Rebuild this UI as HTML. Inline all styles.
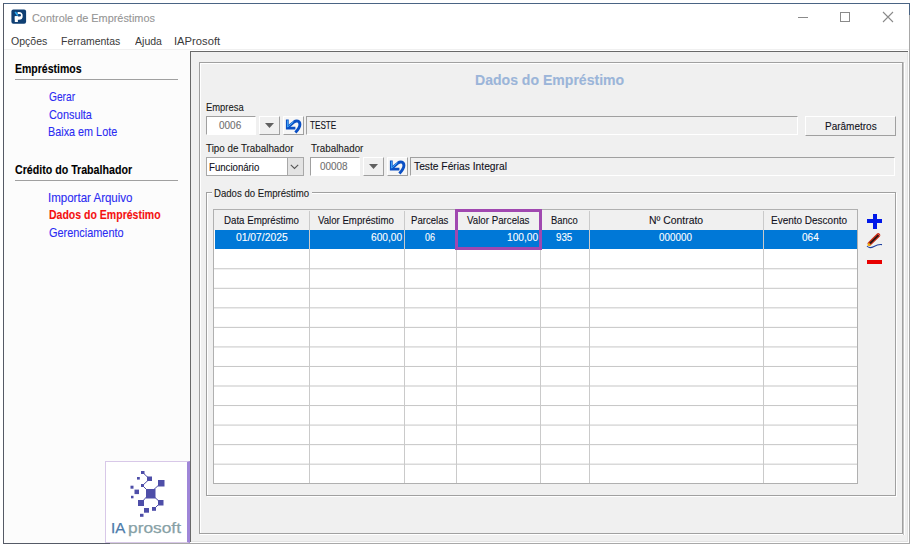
<!DOCTYPE html>
<html><head><meta charset="utf-8"><style>
html,body{margin:0;padding:0;background:#fff;width:914px;height:548px;overflow:hidden;position:relative}
body>div,body>svg{position:absolute}
.t{position:absolute;white-space:nowrap;font-family:"Liberation Sans", sans-serif;-webkit-text-stroke:0.1px currentColor;transform-origin:0 0}
</style></head><body>
<div style="left:3px;top:3px;width:907px;height:541px;background:#fff"></div>
<div style="left:3px;top:3px;width:907px;height:1px;background:#4a6484"></div>
<div style="left:3px;top:3px;width:1px;height:541px;background:#555a66"></div>
<div style="left:3px;top:543px;width:107px;height:1px;background:#555a66"></div>
<div style="left:110px;top:543px;width:800px;height:1px;background:#a8a8a8"></div>
<div style="left:909px;top:3px;width:1px;height:12px;background:#4a6484"></div>
<div style="left:909px;top:15px;width:1px;height:529px;background:#a8a8a8"></div>
<svg style="position:absolute;left:11px;top:9px" width="16" height="16" viewBox="0 0 16 16"><g transform="translate(0.4,0.5)">
<rect x="0" y="0" width="14.7" height="14.3" rx="2" fill="#0f3f73"/>
<path d="M3.4 6.6 H6.5 V12.5 H3.4 Z" fill="#fff"/>
<path d="M6.2 2.6 H7.45 A3.85 3.85 0 0 1 7.45 10.3 H3.4 V7 H8.4 A1.2 1.2 0 0 0 8.4 4.6 H6.2 Z" fill="#fff"/>
<path d="M3.8 2.5 L6.4 6" stroke="#2aa8f0" stroke-width="1.7"/>
</g></svg>
<div class="t" style="left:31.90px;top:13px;font-size:11.2px;line-height:11.2px;color:#959595;font-weight:400;transform:scaleX(0.9737);">Controle de Empréstimos</div>
<div style="left:798px;top:17px;width:10px;height:1px;background:#8a8a8a"></div>
<div style="left:840px;top:12px;width:10px;height:10px;border:1px solid #8a8a8a;box-sizing:border-box"></div>
<svg style="position:absolute;left:882px;top:11px" width="12" height="12" viewBox="0 0 12 12">
<path d="M1 1 L11 11 M11 1 L1 11" stroke="#8a8a8a" stroke-width="1.1" fill="none"/></svg>
<div class="t" style="left:10.60px;top:36px;font-size:11.2px;line-height:11.2px;color:#3a3a3a;font-weight:400;transform:scaleX(0.9420);-webkit-text-stroke:0">Opções</div>
<div class="t" style="left:61.10px;top:36px;font-size:11.2px;line-height:11.2px;color:#3a3a3a;font-weight:400;transform:scaleX(0.9354);-webkit-text-stroke:0">Ferramentas</div>
<div class="t" style="left:134.60px;top:36px;font-size:11.2px;line-height:11.2px;color:#3a3a3a;font-weight:400;transform:scaleX(0.9425);-webkit-text-stroke:0">Ajuda</div>
<div class="t" style="left:174.40px;top:36px;font-size:11.2px;line-height:11.2px;color:#3a3a3a;font-weight:400;transform:scaleX(1.0021);-webkit-text-stroke:0">IAProsoft</div>
<div style="left:4px;top:49px;width:905px;height:1px;background:#f0f0f0"></div>
<div style="left:4px;top:50px;width:186px;height:493px;background:#fcfcfc"></div>
<div class="t" style="left:15.30px;top:63px;font-size:12.4px;line-height:12.4px;color:#000;font-weight:700;transform:scaleX(0.8485);">Empréstimos</div>
<div style="left:15px;top:79px;width:163px;height:1px;background:#a0a0a0"></div>
<div class="t" style="left:48.80px;top:91px;font-size:12.4px;line-height:12.4px;color:#2b2bf2;font-weight:400;transform:scaleX(0.8242);">Gerar</div>
<div class="t" style="left:49.30px;top:109px;font-size:12.4px;line-height:12.4px;color:#2b2bf2;font-weight:400;transform:scaleX(0.8773);">Consulta</div>
<div class="t" style="left:48.43px;top:126px;font-size:12.4px;line-height:12.4px;color:#2b2bf2;font-weight:400;transform:scaleX(0.8734);">Baixa em Lote</div>
<div class="t" style="left:15.00px;top:164px;font-size:12.4px;line-height:12.4px;color:#000;font-weight:700;transform:scaleX(0.8587);">Crédito do Trabalhador</div>
<div style="left:15px;top:180px;width:163px;height:1px;background:#a0a0a0"></div>
<div class="t" style="left:48.07px;top:192px;font-size:12.4px;line-height:12.4px;color:#2b2bf2;font-weight:400;transform:scaleX(0.9295);">Importar Arquivo</div>
<div class="t" style="left:49.00px;top:209px;font-size:12.4px;line-height:12.4px;color:#f41010;font-weight:700;transform:scaleX(0.8489);">Dados do Empréstimo</div>
<div class="t" style="left:49.00px;top:227px;font-size:12.4px;line-height:12.4px;color:#2b2bf2;font-weight:400;transform:scaleX(0.8807);">Gerenciamento</div>
<div style="left:105px;top:461px;width:85px;height:82px;background:#fff;border:1px solid #d8c8e8;border-right:3px solid #9f86d8;box-sizing:border-box"></div>
<svg style="position:absolute;left:0;top:0" width="914" height="548"><rect x="146" y="489" width="9.5" height="9.5" fill="#4e4ea8"/><rect x="158" y="480" width="6.5" height="6.5" fill="#4e4ea8"/><rect x="138" y="500" width="6" height="6" fill="#4e4ea8"/><rect x="158" y="500" width="5.5" height="5.5" fill="#4e4ea8"/><rect x="147" y="476.5" width="5" height="4.5" fill="#4e4ea8"/><rect x="141" y="471" width="3.5" height="3" fill="#4e4ea8"/><rect x="137" y="477" width="2.8" height="2.6" fill="#4e4ea8"/><rect x="141" y="484" width="3" height="3" fill="#4e4ea8"/><rect x="130.5" y="485.7" width="3" height="3" fill="#4e4ea8"/><rect x="134.5" y="489.6" width="4.5" height="4.5" fill="#4e4ea8"/><rect x="131" y="495.8" width="2.5" height="2.5" fill="#4e4ea8"/><rect x="144" y="508" width="5" height="4.7" fill="#4e4ea8"/><rect x="152" y="507" width="4" height="3.8" fill="#4e4ea8"/><rect x="140" y="513.8" width="3.5" height="3" fill="#4e4ea8"/><line x1="150" y1="493" x2="161" y2="483" stroke="#4e4ea8" stroke-width="1"/><line x1="150" y1="493" x2="161" y2="503" stroke="#4e4ea8" stroke-width="1"/><line x1="150" y1="493" x2="141" y2="503" stroke="#4e4ea8" stroke-width="1"/><line x1="150" y1="493" x2="142.5" y2="485.5" stroke="#4e4ea8" stroke-width="1"/><line x1="149.5" y1="479" x2="142.7" y2="472.5" stroke="#4e4ea8" stroke-width="1"/><line x1="149.5" y1="479" x2="142.5" y2="485.5" stroke="#4e4ea8" stroke-width="1"/><line x1="160.5" y1="502.5" x2="154" y2="509" stroke="#4e4ea8" stroke-width="1"/></svg>
<div class="t" style="left:110.91px;top:520px;font-size:15.3px;line-height:15.3px;color:#4b7aaa;font-weight:400;transform:scaleX(0.9895);-webkit-text-stroke:0.25px currentColor">IA</div>
<div class="t" style="left:128.30px;top:520px;font-size:15.3px;line-height:15.3px;color:#87a1a6;font-weight:400;transform:scaleX(1.1323);-webkit-text-stroke:0.25px currentColor">prosoft</div>
<div style="left:190px;top:51px;width:719px;height:492px;background:#f0f0f0"></div>
<div style="left:190px;top:51px;width:718px;height:1px;background:#696969"></div>
<div style="left:190px;top:51px;width:1px;height:491px;background:#696969"></div>
<div style="left:907px;top:52px;width:1px;height:490px;background:#e3e3e3"></div>
<div style="left:191px;top:541px;width:717px;height:1px;background:#e3e3e3"></div>
<div style="left:908px;top:51px;width:1px;height:492px;background:#fff"></div>
<div style="left:190px;top:542px;width:719px;height:1px;background:#fff"></div>
<div style="left:200px;top:63px;width:705px;height:472px;border:1px solid #fff;box-sizing:border-box"></div>
<div style="left:199px;top:62px;width:704px;height:472px;border:1px solid #a0a0a0;box-sizing:border-box"></div>
<div style="left:903px;top:62px;width:1px;height:473px;background:#c4c4c4"></div>
<div class="t" style="left:474.81px;top:72px;font-size:15px;line-height:15px;color:#9bb5d9;font-weight:700;transform:scaleX(0.9369);">Dados do Empréstimo</div>
<div class="t" style="left:205.70px;top:102px;font-size:10.6px;line-height:10.6px;color:#1a1a1a;font-weight:400;transform:scaleX(0.8871);">Empresa</div>
<div style="left:206px;top:116px;width:50px;height:19px;border-top:1px solid #a0a0a0;border-left:1px solid #a0a0a0;border-right:1px solid #fff;border-bottom:1px solid #fff;box-sizing:border-box;background:#fff"></div>
<div class="t" style="left:218.70px;top:120px;font-size:10.6px;line-height:10.6px;color:#707070;font-weight:400;transform:scaleX(0.9419);">0006</div>
<div style="left:259px;top:116px;width:21px;height:19px;border-top:1px solid #fff;border-left:1px solid #fff;border-right:1px solid #a0a0a0;border-bottom:1px solid #a0a0a0;box-sizing:border-box;background:#f0f0f0;"></div>
<svg style="position:absolute;left:265px;top:123px" width="9" height="5" viewBox="0 0 9 5"><path d="M0 0 H9 L4.5 5 Z" fill="#606060"/></svg>
<div style="left:283px;top:116px;width:21px;height:19px;border-top:1px solid #fff;border-left:1px solid #fff;border-right:1px solid #a0a0a0;border-bottom:1px solid #a0a0a0;box-sizing:border-box;background:#f0f0f0;background:#f6f6f6"></div>
<svg style="position:absolute;left:282px;top:114px" width="24" height="22" viewBox="0 0 24 22"><g transform="translate(0,0.8)">
<path d="M5.3 4.6 V13.3 H13.4" fill="none" stroke="#0a4fc4" stroke-width="2.8" stroke-linecap="butt" stroke-linejoin="miter"/>
<path d="M6 12.4 L12 7.2 C14.6 5.2 17.9 6.2 17.9 9.6 C17.9 12.4 15.6 15.2 13.4 17.6" fill="none" stroke="#0a4fc4" stroke-width="2.9"/>
<path d="M5.6 5.6 V12.2 L11.5 7" fill="none" stroke="#4ab4ff" stroke-width="0.9"/>
</g></svg>
<div style="left:306px;top:116px;width:492px;height:19px;border-top:1px solid #a0a0a0;border-left:1px solid #a0a0a0;border-right:1px solid #fff;border-bottom:1px solid #fff;box-sizing:border-box;"></div>
<div class="t" style="left:309.80px;top:120px;font-size:10.6px;line-height:10.6px;color:#101020;font-weight:400;transform:scaleX(0.7689);">TESTE</div>
<div style="left:805px;top:116px;width:91px;height:20px;border-top:1px solid #fff;border-left:1px solid #fff;border-right:1px solid #a0a0a0;border-bottom:1px solid #a0a0a0;box-sizing:border-box;background:#f0f0f0;"></div>
<div class="t" style="left:824.90px;top:121px;font-size:10.6px;line-height:10.6px;color:#101020;font-weight:400;transform:scaleX(0.9439);">Parâmetros</div>
<div class="t" style="left:206.20px;top:143px;font-size:10.6px;line-height:10.6px;color:#1a1a1a;font-weight:400;transform:scaleX(0.9265);">Tipo de Trabalhador</div>
<div class="t" style="left:311.10px;top:143px;font-size:10.6px;line-height:10.6px;color:#1a1a1a;font-weight:400;transform:scaleX(0.9231);">Trabalhador</div>
<div style="left:206px;top:157px;width:98px;height:19px;border:1px solid #a8a8a8;box-sizing:border-box;background:#fff"></div>
<div style="left:287px;top:157px;width:17px;height:19px;border:1px solid #a8a8a8;box-sizing:border-box;background:#e3e3e3"></div>
<svg style="position:absolute;left:290px;top:164px" width="9" height="6" viewBox="0 0 9 6"><path d="M0.8 0.8 L4.5 4.5 L8.2 0.8" fill="none" stroke="#555" stroke-width="1.1"/></svg>
<div class="t" style="left:209.40px;top:162px;font-size:10.6px;line-height:10.6px;color:#101020;font-weight:400;transform:scaleX(0.9087);">Funcionário</div>
<div style="left:310px;top:157px;width:50px;height:19px;border-top:1px solid #a0a0a0;border-left:1px solid #a0a0a0;border-right:1px solid #fff;border-bottom:1px solid #fff;box-sizing:border-box;background:#fff"></div>
<div class="t" style="left:320.00px;top:161px;font-size:10.6px;line-height:10.6px;color:#707070;font-weight:400;transform:scaleX(0.9369);">00008</div>
<div style="left:363px;top:157px;width:21px;height:19px;border-top:1px solid #fff;border-left:1px solid #fff;border-right:1px solid #a0a0a0;border-bottom:1px solid #a0a0a0;box-sizing:border-box;background:#f0f0f0;"></div>
<svg style="position:absolute;left:369px;top:164px" width="9" height="5" viewBox="0 0 9 5"><path d="M0 0 H9 L4.5 5 Z" fill="#606060"/></svg>
<div style="left:387px;top:157px;width:21px;height:19px;border-top:1px solid #fff;border-left:1px solid #fff;border-right:1px solid #a0a0a0;border-bottom:1px solid #a0a0a0;box-sizing:border-box;background:#f0f0f0;background:#f6f6f6"></div>
<svg style="position:absolute;left:386px;top:155px" width="24" height="22" viewBox="0 0 24 22"><g transform="translate(0,0.8)">
<path d="M5.3 4.6 V13.3 H13.4" fill="none" stroke="#0a4fc4" stroke-width="2.8" stroke-linecap="butt" stroke-linejoin="miter"/>
<path d="M6 12.4 L12 7.2 C14.6 5.2 17.9 6.2 17.9 9.6 C17.9 12.4 15.6 15.2 13.4 17.6" fill="none" stroke="#0a4fc4" stroke-width="2.9"/>
<path d="M5.6 5.6 V12.2 L11.5 7" fill="none" stroke="#4ab4ff" stroke-width="0.9"/>
</g></svg>
<div style="left:410px;top:157px;width:485px;height:19px;border-top:1px solid #a0a0a0;border-left:1px solid #a0a0a0;border-right:1px solid #fff;border-bottom:1px solid #fff;box-sizing:border-box;"></div>
<div class="t" style="left:413.50px;top:161px;font-size:10.6px;line-height:10.6px;color:#101020;font-weight:400;transform:scaleX(0.9684);">Teste Férias Integral</div>
<div style="left:207px;top:193px;width:690px;height:304px;border:1px solid #fff;box-sizing:border-box"></div>
<div style="left:206px;top:192px;width:690px;height:304px;border:1px solid #a0a0a0;box-sizing:border-box"></div>
<div style="left:212px;top:187px;width:100px;height:12px;background:#f0f0f0"></div>
<div class="t" style="left:213.90px;top:188px;font-size:10.6px;line-height:10.6px;color:#1a1a1a;font-weight:400;transform:scaleX(0.9065);">Dados do Empréstimo</div>
<div style="left:213px;top:209px;width:645px;height:275px;background:#fff;border:1px solid #b0b0b0;box-sizing:border-box"></div>
<div style="left:214px;top:210px;width:643px;height:19px;background:#f0f0f0"></div>
<div style="left:215px;top:230px;width:642px;height:19px;background:#0078d7"></div>
<svg style="position:absolute;left:0;top:0" width="914" height="548"><rect x="214" y="268.26" width="643" height="1" fill="#c6c6c6"/><rect x="214" y="287.80" width="643" height="1" fill="#c6c6c6"/><rect x="214" y="307.34" width="643" height="1" fill="#c6c6c6"/><rect x="214" y="326.88" width="643" height="1" fill="#c6c6c6"/><rect x="214" y="346.42" width="643" height="1" fill="#c6c6c6"/><rect x="214" y="365.96" width="643" height="1" fill="#c6c6c6"/><rect x="214" y="385.50" width="643" height="1" fill="#c6c6c6"/><rect x="214" y="405.04" width="643" height="1" fill="#c6c6c6"/><rect x="214" y="424.58" width="643" height="1" fill="#c6c6c6"/><rect x="214" y="444.12" width="643" height="1" fill="#c6c6c6"/><rect x="214" y="463.66" width="643" height="1" fill="#c6c6c6"/></svg>
<div style="left:214px;top:229px;width:643px;height:1px;background:#f0f0f0"></div>
<div style="left:309px;top:211px;width:1px;height:272px;background:#cacaca"></div>
<div style="left:404px;top:211px;width:1px;height:272px;background:#cacaca"></div>
<div style="left:456px;top:211px;width:1px;height:272px;background:#cacaca"></div>
<div style="left:540px;top:211px;width:1px;height:272px;background:#cacaca"></div>
<div style="left:589px;top:211px;width:1px;height:272px;background:#cacaca"></div>
<div style="left:763px;top:211px;width:1px;height:272px;background:#cacaca"></div>
<div class="t" style="left:224.20px;top:215px;font-size:10.6px;line-height:10.6px;color:#101020;font-weight:400;transform:scaleX(0.9153);">Data Empréstimo</div>
<div class="t" style="left:318.40px;top:215px;font-size:10.6px;line-height:10.6px;color:#101020;font-weight:400;transform:scaleX(0.9089);">Valor Empréstimo</div>
<div class="t" style="left:411.10px;top:215px;font-size:10.6px;line-height:10.6px;color:#101020;font-weight:400;transform:scaleX(0.9067);">Parcelas</div>
<div class="t" style="left:467.10px;top:215px;font-size:10.6px;line-height:10.6px;color:#101020;font-weight:400;transform:scaleX(0.9173);">Valor Parcelas</div>
<div class="t" style="left:550.60px;top:215px;font-size:10.6px;line-height:10.6px;color:#101020;font-weight:400;transform:scaleX(0.8890);">Banco</div>
<div class="t" style="left:648.70px;top:215px;font-size:10.6px;line-height:10.6px;color:#101020;font-weight:400;transform:scaleX(0.9818);">Nº Contrato</div>
<div class="t" style="left:771.40px;top:215px;font-size:10.6px;line-height:10.6px;color:#101020;font-weight:400;transform:scaleX(0.9420);">Evento Desconto</div>
<div class="t" style="left:235.70px;top:233px;font-size:10.2px;line-height:10.2px;color:#fff;font-weight:400;transform:scaleX(1.0132);">01/07/2025</div>
<div class="t" style="left:370.70px;top:233px;font-size:10.2px;line-height:10.2px;color:#fff;font-weight:400;transform:scaleX(0.9970);">600,00</div>
<div class="t" style="left:424.90px;top:233px;font-size:10.2px;line-height:10.2px;color:#fff;font-weight:400;transform:scaleX(0.8829);">06</div>
<div class="t" style="left:506.70px;top:233px;font-size:10.2px;line-height:10.2px;color:#fff;font-weight:400;transform:scaleX(0.9970);">100,00</div>
<div class="t" style="left:555.90px;top:233px;font-size:10.2px;line-height:10.2px;color:#fff;font-weight:400;transform:scaleX(0.9578);">935</div>
<div class="t" style="left:659.00px;top:233px;font-size:10.2px;line-height:10.2px;color:#fff;font-weight:400;transform:scaleX(0.9671);">000000</div>
<div class="t" style="left:801.80px;top:233px;font-size:10.2px;line-height:10.2px;color:#fff;font-weight:400;transform:scaleX(0.9866);">064</div>
<div style="left:455px;top:209px;width:87px;height:41px;border:3px solid #a048b0;box-sizing:border-box"></div>
<div style="left:867px;top:219px;width:15px;height:4px;background:#0018e8"></div>
<div style="left:873px;top:213.5px;width:4px;height:15px;background:#0018e8"></div>
<div style="left:867px;top:260px;width:15px;height:4px;background:#e80000"></div>
<svg style="position:absolute;left:866px;top:233px" width="17" height="17" viewBox="0 0 17 17">
<path d="M3.6 10.6 L12.2 2.2" stroke="#c82a14" stroke-width="4" stroke-linecap="round"/>
<path d="M4 10.4 L12.4 2.2" stroke="#1a1a1a" stroke-width="1.5"/>
<path d="M12.4 1.4 L13.8 2.8" stroke="#f07070" stroke-width="1"/>
<path d="M1.6 13 L2.4 9.6 L5.2 12.2 Z" fill="#f0b000"/>
<path d="M1 13 C2.5 15 5 15 8 13.4 C10.5 12 13 11.2 16 11.6" stroke="#1d3fa0" stroke-width="1.1" fill="none"/>
</svg>
</body></html>
